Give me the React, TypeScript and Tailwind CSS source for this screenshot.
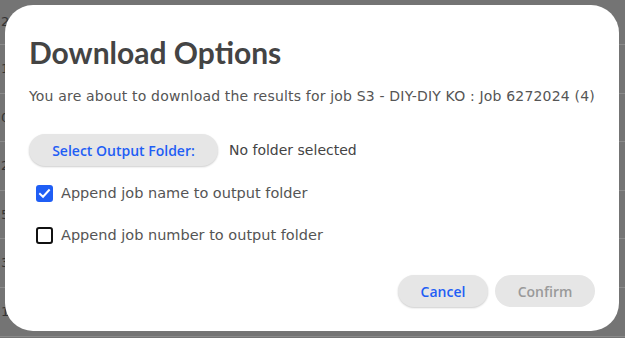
import React from "react";

export default function App() {
  const rows = ["24", "1", "0", "2", "5", "3", "1"];
  return (
    <div className="relative w-[625px] h-[338px] overflow-hidden bg-[#747474]" style={{ fontFamily: "'DejaVu Sans', sans-serif" }}>
      <div className="flex flex-col">
        {rows.map((r, i) => (
          <div key={i} className={`${i === 0 ? "h-[45px]" : "h-[48.6px]"} border-b border-[#8a8a8a] flex items-center text-[13px] text-[#333] pl-[1px]`}>
            {r}
          </div>
        ))}
      </div>
      <div className="absolute left-[5px] top-[5px] w-[614px] h-[326px] bg-white rounded-[28px] flex flex-col px-[24px]">
        <h1 className="mt-[27px] text-[30px] leading-[40px] font-bold text-[#444]" style={{ fontFamily: "Lato, sans-serif" }}>
          Download Options
        </h1>
        <p className="mt-[14px] text-[14px] leading-[20px] tracking-[0.18px] text-[#555]">
          You are about to download the results for job S3 - DIY-DIY KO : Job 6272024 (4)
        </p>
        <div className="mt-[28px] flex items-center gap-[11px]">
          <button className="h-[32px] w-[189px] rounded-full bg-[#e6e6e6] shadow-[0_1px_2px_rgba(0,0,0,0.2)] text-[#1f5ef5] text-[14px] font-semibold" style={{ fontFamily: "'Open Sans', sans-serif" }}>
            Select Output Folder:
          </button>
          <span className="text-[14px] text-[#444]">No folder selected</span>
        </div>
        <label className="mt-[17px] ml-[7px] flex items-center gap-[8px] text-[14.5px] text-[#555]">
          <span className="w-[17px] h-[17px] rounded-[3px] bg-[#1f5ef5] flex items-center justify-center">
            <svg width="13" height="13" viewBox="0 0 16 16" fill="none">
              <path d="M2.5 8.5 L6.2 12 L13.5 4" stroke="white" strokeWidth="2.4" strokeLinecap="square" />
            </svg>
          </span>
          Append job name to output folder
        </label>
        <label className="mt-[20px] ml-[7px] flex items-center gap-[8px] text-[14.5px] text-[#555]">
          <span className="w-[17px] h-[17px] rounded-[3px] border-2 border-[#111] bg-white" />
          Append job number to output folder
        </label>
        <div className="mt-auto mb-[24px] flex justify-end gap-[7px]">
          <button className="h-[32px] w-[90px] rounded-full bg-[#e6e6e6] shadow-[0_1px_2px_rgba(0,0,0,0.2)] text-[#1f5ef5] text-[14px] font-semibold" style={{ fontFamily: "'Open Sans', sans-serif" }}>
            Cancel
          </button>
          <button className="h-[32px] w-[100px] rounded-full bg-[#e6e6e6] text-[#9a9a9a] text-[14px] font-semibold" style={{ fontFamily: "'Open Sans', sans-serif" }}>
            Confirm
          </button>
        </div>
      </div>
    </div>
  );
}
